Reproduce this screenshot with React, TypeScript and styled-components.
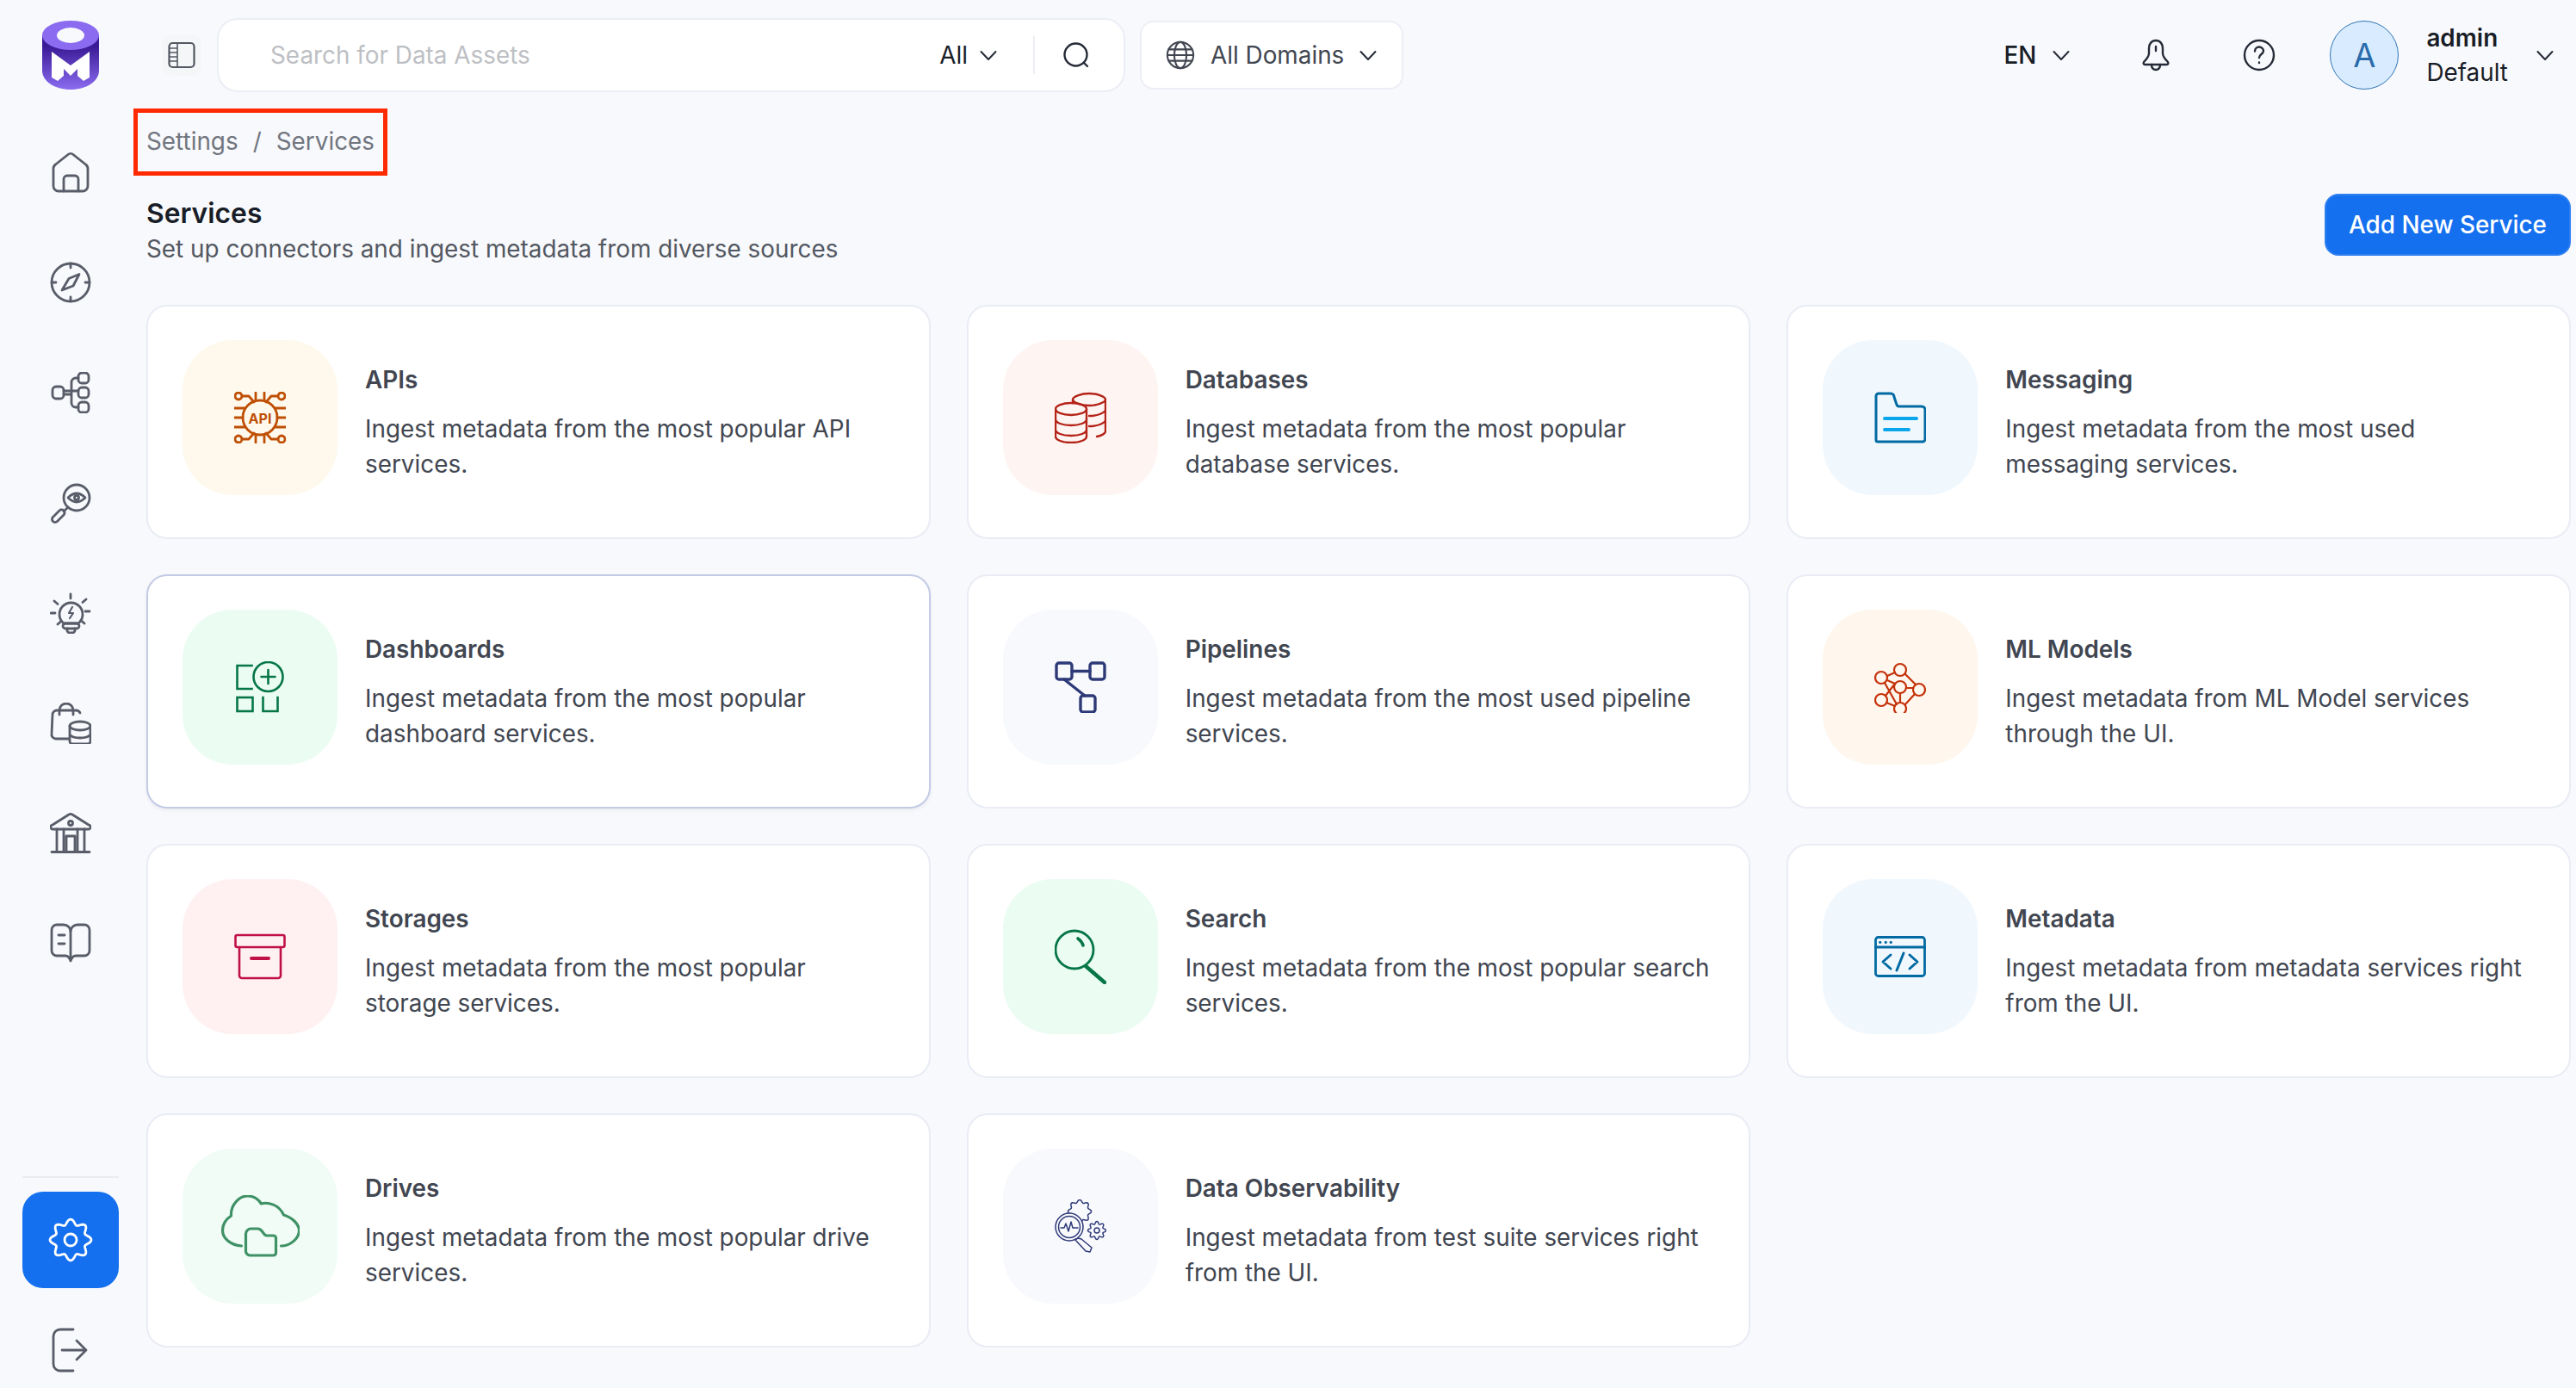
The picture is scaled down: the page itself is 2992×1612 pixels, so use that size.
import React from 'react';
import styled, { createGlobalStyle } from 'styled-components';

const GlobalStyle = createGlobalStyle`
  html, body { margin: 0; padding: 0; background: #f8f9fc; }
  body { font-family: Inter, "Noto Sans", sans-serif; }
  * { box-sizing: border-box; }
`;

const Page = styled.div`
  display: flex;
  width: 2992px;
  height: 1612px;
  overflow: hidden;
  background: #f8f9fc;
`;

const Sidebar = styled.aside`
  width: 170px;
  flex: none;
  display: flex;
  flex-direction: column;
  align-items: center;
  padding: 24px 6px 18px 0;
`;

const Logo = styled.div`
  height: 80px;
  margin-bottom: 32px;
`;

const NavItem = styled.div`
  width: 112px;
  height: 128px;
  flex: none;
  display: flex;
  align-items: center;
  justify-content: center;
`;

const BottomNav = styled.div`
  margin-top: auto;
  display: flex;
  flex-direction: column;
  align-items: center;
`;

const Divider = styled.div`
  width: 112px;
  height: 2px;
  background: #ebecf1;
  margin-bottom: 16px;
`;

const ActiveItem = styled.div`
  width: 112px;
  height: 112px;
  border-radius: 24px;
  background: #1570ef;
  display: flex;
  align-items: center;
  justify-content: center;
  margin-bottom: 46px;
`;

const Main = styled.main`
  flex: 1;
  min-width: 0;
  padding-right: 6px;
  display: flex;
  flex-direction: column;
`;

const TopBar = styled.header`
  height: 128px;
  flex: none;
  display: flex;
  align-items: center;
`;

const ToggleButton = styled.div`
  width: 46px;
  height: 48px;
  margin-left: 18px;
  margin-right: 18px;
  border-radius: 12px;
  background: #f5f6f8;
  display: flex;
  align-items: center;
  justify-content: center;
`;

const SearchBox = styled.div`
  width: 1055px;
  height: 86px;
  background: #fff;
  border: 2px solid #eceef5;
  border-radius: 24px;
  display: flex;
  align-items: center;
  padding-left: 60px;
  padding-right: 39px;
`;

const Placeholder = styled.span`
  flex: 1;
  font-size: 27.86px;
  color: #bdbfc4;
`;

const SelectLabel = styled.span`
  display: flex;
  align-items: center;
  gap: 14px;
  font-size: 27.86px;
  color: #181d27;
`;

const SearchDivider = styled.div`
  width: 2px;
  height: 44px;
  background: #eceef2;
  margin: 0 32px 0 42px;
`;

const DomainButton = styled.div`
  width: 306px;
  height: 80px;
  margin-left: 17px;
  background: #fff;
  border: 2px solid #eceef5;
  border-radius: 16px;
  display: flex;
  align-items: center;
  padding-left: 28px;
  gap: 18px;
  font-size: 27.86px;
  color: #414651;
`;

const TopRight = styled.div`
  margin-left: auto;
  padding-right: 20px;
  display: flex;
  align-items: center;
`;

const Lang = styled.div`
  display: flex;
  align-items: center;
  gap: 19px;
  font-size: 27.86px;
  font-weight: 500;
  color: #181d27;
  margin-right: 83px;
`;

const TopIcon = styled.div<{ $gap: number }>`
  display: flex;
  margin-right: ${(p) => p.$gap}px;
`;

const Avatar = styled.div`
  width: 80px;
  height: 80px;
  border-radius: 50%;
  background: #d9ecff;
  border: 1.5px solid #2f74b5;
  color: #2a6cab;
  font-size: 38px;
  display: flex;
  align-items: center;
  justify-content: center;
`;

const UserInfo = styled.div`
  margin-left: 32px;
  margin-right: 33px;
  display: flex;
  flex-direction: column;
  font-size: 27.86px;
  line-height: 40px;
  color: #181d27;
`;

const UserName = styled.span`
  font-weight: 600;
`;

const Breadcrumb = styled.nav`
  position: relative;
  height: 72px;
  display: flex;
  align-items: center;
  gap: 17px;
  font-size: 27.86px;
  color: #717680;
`;

const Highlight = styled.div`
  position: absolute;
  left: -15px;
  top: -2px;
  width: 295px;
  height: 78px;
  border: 5px solid #ff2a00;
`;

const Header = styled.div`
  display: flex;
  align-items: flex-start;
  justify-content: space-between;
  height: 154px;
  padding-top: 25px;
`;

const Heading = styled.div`
  padding-top: 2px;
`;

const PageTitle = styled.h1`
  margin: 0;
  font-size: 31.8px;
  line-height: 42px;
  font-weight: 600;
  color: #181d27;
`;

const PageSub = styled.p`
  margin: 0;
  font-size: 27.86px;
  line-height: 41px;
  color: #535862;
`;

const AddButton = styled.button`
  width: 286px;
  height: 72px;
  border: 2px solid #2e7ff0;
  border-radius: 16px;
  background: #1570ef;
  color: #fff;
  font-family: inherit;
  font-size: 27.86px;
  font-weight: 500;
`;

const Grid = styled.div`
  display: grid;
  grid-template-columns: repeat(3, 1fr);
  grid-auto-rows: 272px;
  gap: 41px 42px;
`;

const Card = styled.div<{ $hovered?: boolean }>`
  background: #fff;
  border: 2px solid ${(p) => (p.$hovered ? '#c3cbe6' : '#eaecf5')};
  border-radius: 24px;
  padding: 39px 40px;
  display: flex;
  align-items: flex-start;
  gap: 32px;
  box-shadow: ${(p) => (p.$hovered ? '0 2px 4px rgba(16,24,40,0.06)' : 'none')};
`;

const IconBox = styled.div<{ $bg: string }>`
  width: 180px;
  height: 180px;
  flex: none;
  border-radius: 58px;
  background: ${(p) => p.$bg};
  display: flex;
  align-items: center;
  justify-content: center;
`;

const CardText = styled.div`
  padding-top: 26px;
  min-width: 0;
`;

const CardTitle = styled.h3`
  margin: 0 0 17px;
  font-size: 27.86px;
  line-height: 40px;
  font-weight: 600;
  color: #414651;
`;

const CardDesc = styled.p`
  margin: 0;
  font-size: 27.86px;
  line-height: 40.5px;
  color: #414651;
`;

const Ink = styled.svg`
  display: block;
  fill: none;
  stroke: currentColor;
  stroke-linecap: round;
  stroke-linejoin: round;
`;

const NavInk = styled(Ink)`
  color: #585d69;
  stroke-width: 2.8;
`;

// wavy outline used for the settings and observability cogs
function gearPath(cx: number, cy: number, r: number, amp: number, teeth: number) {
  const pts: string[] = [];
  for (let i = 0; i < 120; i++) {
    const a = (i / 120) * Math.PI * 2;
    const rad = r + amp * Math.cos(teeth * a);
    pts.push(`${(cx + rad * Math.sin(a)).toFixed(2)} ${(cy - rad * Math.cos(a)).toFixed(2)}`);
  }
  return 'M' + pts.join('L') + 'Z';
}

const Chevron = () => (
  <Ink width="20" height="20" viewBox="0 0 20 20" strokeWidth={2} style={{ color: '#252b37' }}>
    <path d="M1.500 6l8.500 9 8.500-9" />
  </Ink>
);

const LogoMark = () => (
  <svg width="66" height="80" viewBox="0 0 66 80" style={{ display: 'block' }}>
    <defs>
      <linearGradient id="body" x1="0" y1="0" x2="0" y2="1">
        <stop offset="0.2" stopColor="#3a1a96" />
        <stop offset="1" stopColor="#8b6cf0" />
      </linearGradient>
    </defs>
    <path d="M0 17H66V58C66 70 52 80 33 80S0 70 0 58Z" fill="url(#body)" />
    <ellipse cx="33" cy="17" rx="33" ry="17" fill="#8b6cf0" />
    <ellipse cx="33" cy="17" rx="16" ry="9" fill="#f8f9fc" />
    <path d="M11 36 33 52 55 36V66L48 70 41 64V56L33 64 25 56V64L18 70 11 66Z" fill="#fff" />
  </svg>
);

const ToggleIcon = () => (
  <Ink width="32" height="32" viewBox="0 0 32 32" strokeWidth={2.2} style={{ color: '#535862' }}>
    <rect x="1.500" y="2" width="29" height="28" rx="4" />
    <path d="M11 2v28M2 8h9M2 13h9M2 18h9M2 23h9" strokeWidth={1.6} />
  </Ink>
);

const NavHome = () => (
  <NavInk width="48" height="48" viewBox="0 0 48 48">
    <path d="M21 3.500a4.500 4.500 0 0 1 6 0L41.500 15a6 6 0 0 1 2.500 5V40a6 6 0 0 1-6 6H10a6 6 0 0 1-6-6V20a6 6 0 0 1 2.500-5Z" />
    <path d="M16 46V32a4 4 0 0 1 4-4h9a4 4 0 0 1 4 4V46" />
  </NavInk>
);

const NavCompass = () => (
  <NavInk width="48" height="48" viewBox="0 0 48 48">
    <circle cx="24" cy="24" r="22" />
    <path d="M24 2v5M24 41v5M2 24h5M41 24h5" />
    <path d="M34 14.500 22 19.500 14 33 27 28Z" />
  </NavInk>
);

const NavLineage = () => (
  <NavInk width="48" height="48" viewBox="0 0 48 48">
    <rect x="3" y="17" width="13" height="14" rx="4" />
    <rect x="33" y="1" width="12" height="12" rx="4" />
    <rect x="33" y="18" width="12" height="12" rx="4" />
    <rect x="33" y="35" width="12" height="12" rx="4" />
    <path d="M16 22h17M16 26h9M33 7h-3a5 5 0 0 0-5 5V36a5 5 0 0 0 5 5h3" />
  </NavInk>
);

const NavObserve = () => (
  <NavInk width="48" height="48" viewBox="0 0 48 48">
    <circle cx="31" cy="18" r="15" />
    <path d="M21 18Q31 8 41 18Q31 28 21 18Z" />
    <circle cx="31" cy="18" r="2.500" />
    <path d="M21 29l-5 5" />
    <path d="M11 33 3.500 40.500a3.500 3.500 0 0 0 5 5L16 38a3.500 3.500 0 0 0-5-5Z" />
  </NavInk>
);

const NavInsights = () => (
  <NavInk width="48" height="48" viewBox="0 0 48 48">
    <path d="M24 2v5M5 10l4 3.500M42 8l-4 3.500M1 24h5M41 22h5M9 37l4-3.500M40 36l-4-3.500" />
    <path d="M16 36a13.500 13.500 0 1 1 17 0Z" />
    <path d="M26 17l-4 7h5l-4 6" strokeWidth={2.2} />
    <rect x="15" y="36" width="19" height="6" rx="3" />
    <path d="M20 42v2a3 3 0 0 0 3 3h3a3 3 0 0 0 3-3v-2" />
  </NavInk>
);

const NavMarket = () => (
  <NavInk width="48" height="48" viewBox="0 0 48 48">
    <path d="M35 12a5 5 0 0 0-4-3H8a5 5 0 0 0-5 5L2 36a5 5 0 0 0 5 6H22" />
    <path d="M11 14V9a8 8 0 0 1 16 0v5" />
    <ellipse cx="35" cy="27" rx="12" ry="5" />
    <path d="M23 27v18a3 3 0 0 0 3 3h18a3 3 0 0 0 3-3V27M23 37c2 3 6 4 12 4s10-1 12-4" />
  </NavInk>
);

const NavGovern = () => (
  <NavInk width="48" height="48" viewBox="0 0 48 48">
    <path d="M22 2 3 14a2.500 2.500 0 0 0 1 5H44a2.500 2.500 0 0 0 1-5L26 2a4 4 0 0 0-4 0Z" />
    <circle cx="24" cy="12" r="2.500" />
    <path d="M8 19V45M16 19V45M32 19V45M40 19V45M2 45.500H46M19 45V27H29V45" />
  </NavInk>
);

const NavBook = () => (
  <NavInk width="48" height="48" viewBox="0 0 48 48">
    <path d="M24 10a8 8 0 0 0-8-8H8a6 6 0 0 0-6 6V32a6 6 0 0 0 6 6H18q4 0 6 6q2-6 6-6H40a6 6 0 0 0 6-6V8a6 6 0 0 0-6-6H32a8 8 0 0 0-8 8Z" />
    <path d="M24 10V42M10 14h7M10 24h7" />
  </NavInk>
);

const NavGear = () => (
  <Ink width="52" height="52" viewBox="0 0 52 52" strokeWidth={2.8} style={{ color: '#fff' }}>
    <path d={gearPath(26, 26, 21, 3, 8)} />
    <circle cx="26" cy="26" r="7" />
  </Ink>
);

const NavLogout = () => (
  <NavInk width="48" height="52" viewBox="3 0 48 52">
    <path d="M30 2H15a8 8 0 0 0-8 8V42a8 8 0 0 0 8 8H30" />
    <path d="M17 26H45M34 15l11 11-11 11" />
  </NavInk>
);

const Globe = () => (
  <Ink width="34" height="34" viewBox="0 0 36 36" strokeWidth={2.2} style={{ color: '#414651' }}>
    <circle cx="18" cy="18" r="16" />
    <path d="M2 18H34M3.500 11H32.500M3.500 25H32.500" />
    <ellipse cx="18" cy="18" rx="7.500" ry="16" />
  </Ink>
);

const SearchGlyph = () => (
  <Ink width="32" height="32" viewBox="0 0 32 32" strokeWidth={2.4} style={{ color: '#252b37' }}>
    <circle cx="15.500" cy="15.500" r="13" />
    <path d="M25 25l4 4" />
  </Ink>
);

const Bell = () => (
  <Ink width="34" height="38" viewBox="0 0 34 38" strokeWidth={2.4} style={{ color: '#252b37' }}>
    <path d="M17 2c-5 0-8 4-8 9v6c0 4-3 7-6 10-1 2 0 3 2 3H29c2 0 3-1 2-3-3-3-6-6-6-10V11c0-5-3-9-8-9Z" />
    <path d="M17 9v5M12 30c0 4 2 6 5 6s5-2 5-6" />
  </Ink>
);

const Help = () => (
  <Ink width="38" height="38" viewBox="0 0 38 38" strokeWidth={2.4} style={{ color: '#252b37' }}>
    <circle cx="19" cy="19" r="17" />
    <path d="M14 14.500c0-3 2.500-5 5-5s5 2 5 4.500c0 4-5 4-5 8" />
    <path d="M19 27.500v.5" />
  </Ink>
);

const ApiIcon = () => (
  <Ink width="60" height="60" viewBox="0 0 60 60" strokeWidth={2.8} style={{ color: '#bf4f05' }}>
    <circle cx="30" cy="30" r="20" />
    <circle cx="5" cy="5" r="4" />
    <circle cx="55" cy="5" r="4" />
    <circle cx="5" cy="55" r="4" />
    <circle cx="55" cy="55" r="4" />
    <path d="M9 5h8l6 7M51 5h-8l-6 7M9 55h8l6-7M51 55h-8l-6-7M25 1v9M35 1v9M25 50v9M35 50v9M0 19h12M0 30h10M0 41h12M60 19H48M60 30H50M60 41H48" />
    <text x="30" y="36.500" textAnchor="middle" fontFamily="Inter" fontWeight="700" fontSize="16" fill="#bf4f05" stroke="none">API</text>
  </Ink>
);

const DatabaseIcon = () => (
  <Ink width="60" height="60" viewBox="0 0 60 60" strokeWidth={2.4} style={{ color: '#b42318' }}>
    <path d="M21 13V9c0-3 9-7 19-7s19 4 19 7v37c0 2-4 5-10 6" />
    <path d="M21 9c0 3 9 7 19 7s19-4 19-7M40 28c8 0 15-2 19-6M40 40c8 0 15-2 19-6" />
    <ellipse cx="19" cy="20" rx="18" ry="7" />
    <path d="M1 20V52c0 4 8 7 18 7s18-3 18-7V20M1 32c0 4 8 7 18 7s18-3 18-7M1 44c0 4 8 7 18 7s18-3 18-7" />
  </Ink>
);

const MessagingIcon = () => (
  <Ink width="60" height="60" viewBox="0 0 60 60" strokeWidth={3} style={{ color: '#026aa2' }}>
    <path d="M4 58h52a3 3 0 0 0 3-3V21a4 4 0 0 0-4-4H29a3 3 0 0 1-3-2l-3-9a4 4 0 0 0-4-4H5a3 3 0 0 0-3 3V56a2 2 0 0 0 2 2Z" />
    <path d="M12 31H49M12 44H40" stroke="#0ba5ec" strokeWidth={4} />
  </Ink>
);

const DashboardIcon = () => (
  <Ink width="56" height="60" viewBox="1.500 0 56 60" strokeWidth={2.6} style={{ color: '#067647' }}>
    <path d="M20 5H3V32H20" strokeLinecap="square" strokeLinejoin="miter" />
    <circle cx="39" cy="18" r="17" />
    <path d="M39 10V26M31 18H47" />
    <rect x="3" y="42" width="18" height="16" strokeLinejoin="miter" />
    <path d="M33 42V58H50V42" strokeLinejoin="miter" strokeLinecap="square" />
  </Ink>
);

const PipelineIcon = () => (
  <Ink width="60" height="60" viewBox="0 0 60 60" strokeWidth={3.4} style={{ color: '#2e3a78' }}>
    <rect x="2" y="2" width="18" height="19" rx="3" />
    <rect x="41" y="2" width="17" height="19" rx="3" />
    <rect x="30" y="40" width="17" height="19" rx="3" />
    <path d="M20 11.500H41M11 21l24 19" />
  </Ink>
);

const MlIcon = () => (
  <Ink width="60" height="60" viewBox="0 0 60 60" strokeWidth={2.2} style={{ color: '#c4320a' }}>
    <circle cx="8" cy="19" r="7" />
    <circle cx="30" cy="10" r="7" />
    <circle cx="30" cy="30" r="7" />
    <circle cx="52" cy="33" r="7" />
    <circle cx="8" cy="45" r="7" />
    <circle cx="30" cy="55" r="7" />
    <path d="M15 17l9-4M12 25l14 25M24 26l-11 14M36 15l12 12M37 31h8M30 37v11M14 48l10 4M36 50l11-12M15 22l9 4" />
  </Ink>
);

const StorageIcon = () => (
  <Ink width="60" height="60" viewBox="0 0 60 60" strokeWidth={2.6} style={{ color: '#c01048' }}>
    <rect x="1.500" y="5" width="57" height="14" rx="2" />
    <path d="M6 19V52a3 3 0 0 0 3 3H51a3 3 0 0 0 3-3V19" />
    <path d="M20 32H40" strokeWidth={4} />
  </Ink>
);

const SearchIcon = () => (
  <Ink width="60" height="64" viewBox="0 0 60 64" strokeWidth={2.8} style={{ color: '#067647' }}>
    <circle cx="23" cy="24" r="22" />
    <path d="M36 43 58 62" strokeWidth={4.400} />
    <path d="M27 11c3 2 5 5 6 8" strokeWidth={3.600} />
  </Ink>
);

const MetadataIcon = () => (
  <Ink width="60" height="48" viewBox="0 0 60 48" strokeWidth={2.8} style={{ color: '#026aa2' }}>
    <rect x="1.500" y="1.500" width="57" height="45" rx="3" />
    <path d="M1.500 13H58.500" />
    <path d="M6.500 7.500h.5M13 7.500h.5M19 7.500h.5" />
    <path d="M19 22l-9 8 9 8M41 22l9 8-9 8M34 20l-8 20" strokeWidth={3} />
  </Ink>
);

const DriveIcon = () => (
  <Ink width="92" height="72" viewBox="-1.500 0 92 72" strokeWidth={3.2} style={{ color: '#3f9166' }}>
    <path d="M23 59C10 58 1 50 1 41C1 33 5 28 11 24C10 12 20 1 30 1C36 1 42 4 46 10C53 8 66 10 72 23C82 26 90 34 90 41C90 50 80 59 69 59" />
    <path d="M28 45a6 6 0 0 1 6-6h8c2 0 3 1 4 2l4 5q1 1 3 1h7a3 3 0 0 1 3 3v17a3 3 0 0 1-3 3H34a6 6 0 0 1-6-4Z" />
  </Ink>
);

const ObservabilityIcon = () => (
  <Ink width="60" height="62" viewBox="0 0 60 62" strokeWidth={1.500} style={{ color: '#2e3a78' }}>
    <path d={gearPath(29, 14, 12, 1.600, 8)} />
    <circle cx="17" cy="32" r="16" fill="#f8f9fc" />
    <circle cx="17" cy="32" r="12.500" />
    <path d="M7 33h4l2-5 3 9 3-11 2 7h6" />
    <path d={gearPath(49, 36, 9, 1.500, 8)} />
    <circle cx="49" cy="36" r="3" />
    <path d="M24 47l3-2 4 1 12 10-2 5-5-1Z" />
  </Ink>
);

const services = [
  { name: 'APIs', desc: 'Ingest metadata from the most popular API services.', bg: '#fef9ec', icon: <ApiIcon /> },
  { name: 'Databases', desc: 'Ingest metadata from the most popular database services.', bg: '#fef5f2', icon: <DatabaseIcon /> },
  { name: 'Messaging', desc: 'Ingest metadata from the most used messaging services.', bg: '#f0f8fe', icon: <MessagingIcon /> },
  { name: 'Dashboards', desc: 'Ingest metadata from the most popular dashboard services.', bg: '#ebfcf3', icon: <DashboardIcon />, hovered: true },
  { name: 'Pipelines', desc: 'Ingest metadata from the most used pipeline services.', bg: '#f8f9fc', icon: <PipelineIcon /> },
  { name: 'ML Models', desc: 'Ingest metadata from ML Model services through the UI.', bg: '#fff6ed', icon: <MlIcon /> },
  { name: 'Storages', desc: 'Ingest metadata from the most popular storage services.', bg: '#fff1f1', icon: <StorageIcon /> },
  { name: 'Search', desc: 'Ingest metadata from the most popular search services.', bg: '#ebfcf3', icon: <SearchIcon /> },
  { name: 'Metadata', desc: 'Ingest metadata from metadata services right from the UI.', bg: '#f0f8fe', icon: <MetadataIcon /> },
  { name: 'Drives', desc: 'Ingest metadata from the most popular drive services.', bg: '#f0fcf5', icon: <DriveIcon /> },
  { name: 'Data Observability', desc: 'Ingest metadata from test suite services right from the UI.', bg: '#f8f9fc', icon: <ObservabilityIcon /> },
];

export default function App() {
  return (
    <Page>
      <GlobalStyle />
      <Sidebar>
        <Logo><LogoMark /></Logo>
        <NavItem><NavHome /></NavItem>
        <NavItem><NavCompass /></NavItem>
        <NavItem><NavLineage /></NavItem>
        <NavItem><NavObserve /></NavItem>
        <NavItem><NavInsights /></NavItem>
        <NavItem><NavMarket /></NavItem>
        <NavItem><NavGovern /></NavItem>
        <NavItem><NavBook /></NavItem>
        <BottomNav>
          <Divider />
          <ActiveItem><NavGear /></ActiveItem>
          <NavLogout />
        </BottomNav>
      </Sidebar>
      <Main>
        <TopBar>
          <ToggleButton><ToggleIcon /></ToggleButton>
          <SearchBox>
            <Placeholder>Search for Data Assets</Placeholder>
            <SelectLabel>All <Chevron /></SelectLabel>
            <SearchDivider />
            <SearchGlyph />
          </SearchBox>
          <DomainButton>
            <Globe />
            <span>All Domains</span>
            <Chevron />
          </DomainButton>
          <TopRight>
            <Lang>EN <Chevron /></Lang>
            <TopIcon $gap={84}><Bell /></TopIcon>
            <TopIcon $gap={63}><Help /></TopIcon>
            <Avatar>A</Avatar>
            <UserInfo>
              <UserName>admin</UserName>
              <span>Default</span>
            </UserInfo>
            <Chevron />
          </TopRight>
        </TopBar>
        <Breadcrumb>
          <Highlight />
          <span>Settings</span>
          <span>/</span>
          <span>Services</span>
        </Breadcrumb>
        <Header>
          <Heading>
            <PageTitle>Services</PageTitle>
            <PageSub>Set up connectors and ingest metadata from diverse sources</PageSub>
          </Heading>
          <AddButton>Add New Service</AddButton>
        </Header>
        <Grid>
          {services.map((s) => (
            <Card key={s.name} $hovered={s.hovered}>
              <IconBox $bg={s.bg}>{s.icon}</IconBox>
              <CardText>
                <CardTitle>{s.name}</CardTitle>
                <CardDesc>{s.desc}</CardDesc>
              </CardText>
            </Card>
          ))}
        </Grid>
      </Main>
    </Page>
  );
}
